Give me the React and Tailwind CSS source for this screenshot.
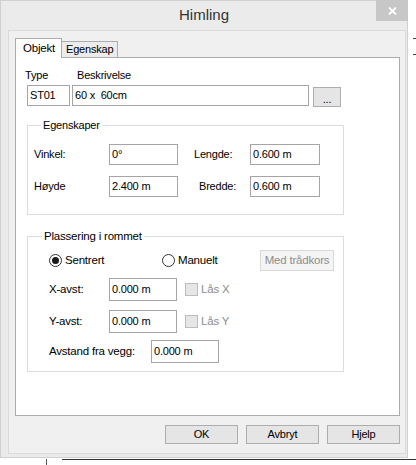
// Windows-style "Himling" dialog with tabbed properties form.
const font = { fontFamily: '"Liberation Sans", Arial, sans-serif' }

function TextBox({ value, className = '' }) {
  return (
    <div
      className={`whitespace-pre border border-[#a5a5a5] bg-white pl-[2px] pt-[3px] text-[11px] leading-[13px] text-black ${className}`}
    >
      {value}
    </div>
  )
}

function WinButton({ children, className = '' }) {
  return (
    <button
      type="button"
      className={`flex items-center justify-center border border-[#adadad] bg-[#e5e5e5] text-[11px] leading-none text-black ${className}`}
    >
      {children}
    </button>
  )
}

function Radio({ checked, label, className = '' }) {
  return (
    <label className={`flex items-center gap-[3px] ${className}`}>
      <span className="flex h-[13px] w-[13px] items-center justify-center rounded-full border border-[#333] bg-white">
        {checked && <span className="h-[7px] w-[7px] rounded-full bg-[#1a1a1a]" />}
      </span>
      <span className="text-[11.5px] text-black">{label}</span>
    </label>
  )
}

function CheckDisabled({ label }) {
  return (
    <label className="flex items-center gap-[3px]">
      <span className="h-[13px] w-[13px] border border-[#bcbcbc] bg-[#e6e6e6]" />
      <span className="text-[11.5px] text-[#8d8d8d]">{label}</span>
    </label>
  )
}

export default function App() {
  return (
    <div className="h-[465px] w-[416px] overflow-hidden bg-white tracking-[-0.2px]" style={font}>
      <div className="flex">
        {/* dialog window */}
        <div className="flex h-[458px] w-[408px] flex-col border border-[#d0d0d0] bg-[#ebebeb]">
          {/* title bar */}
          <div className="relative flex h-[29px] items-center justify-center">
            <span className="-mt-[1px] text-[15px] tracking-normal text-[#333]">Himling</span>
            <div className="absolute right-[-1px] top-[-1px] flex h-[21px] w-[32px] items-center justify-center bg-[#c7c7c7]">
              <svg width="9" height="8" viewBox="0 0 9 8">
                <path d="M1 0.5 L8 7.5 M8 0.5 L1 7.5" stroke="white" strokeWidth="1.8" />
              </svg>
            </div>
          </div>

          {/* client area */}
          <div className="ml-[7px] flex w-[398px] flex-col border border-[#dadada] bg-[#f0f0f0] pb-[9px] pl-[6px] pr-[5px] pt-[7px]">
            {/* tabs */}
            <div className="flex items-end">
              <div className="relative z-10 -mb-px flex h-[20px] w-[47px] items-start border border-b-0 border-[#acacac] bg-white pl-[7px] pt-[2px] text-[11.5px] leading-[14px] text-black">
                Objekt
              </div>
              <div className="flex h-[16px] w-[56px] items-start overflow-hidden border border-b-0 border-l-0 border-[#acacac] bg-[#ececec] pl-[4px] pt-[1px] text-[11px] leading-[13px] text-black">
                Egenskap
              </div>
            </div>

            {/* tab panel */}
            <div className="flex h-[359px] flex-col border border-[#acacac] bg-white pl-[9px]">
              <div className="mt-[11px] flex text-[11px] leading-[13px] text-black">
                <span className="w-[52px]">Type</span>
                <span>Beskrivelse</span>
              </div>
              <div className="mt-[3px] flex items-start">
                <TextBox value="ST01" className="ml-[2px] h-[21px] w-[43px]" />
                <TextBox value="60 x  60cm" className="ml-[2px] h-[21px] w-[237px]" />
                <WinButton className="ml-[4px] mt-[2px] h-[20px] w-[28px] pt-[5px]">...</WinButton>
              </div>

              {/* Egenskaper group */}
              <fieldset className="ml-[2px] mt-[12px] w-[317px] border border-[#dcdcdc] pb-[17px] pl-[6px]">
                <legend className="ml-[7px] px-[2px] text-[11px] leading-[13px] text-black">Egenskaper</legend>
                <div className="mt-[12px] flex h-[21px] items-center text-[11px] text-black">
                  <span className="w-[75px]">Vinkel:</span>
                  <TextBox value="0°" className="h-[21px] w-[69px]" />
                  <span className="ml-[16px] w-[56px]">Lengde:</span>
                  <TextBox value="0.600 m" className="h-[21px] w-[70px]" />
                </div>
                <div className="mt-[11px] flex h-[21px] items-center text-[11px] text-black">
                  <span className="w-[75px]">Høyde</span>
                  <TextBox value="2.400 m" className="h-[21px] w-[69px]" />
                  <span className="ml-[16px] w-[56px] pl-[5px]">Bredde:</span>
                  <TextBox value="0.600 m" className="h-[21px] w-[70px]" />
                </div>
              </fieldset>

              {/* Plassering group */}
              <fieldset className="ml-[2px] mt-[15px] w-[317px] border border-[#dcdcdc] pb-[8px] pl-[21px]">
                <legend className="ml-[-7px] px-[2px] text-[11.5px] leading-[13px] text-black">Plassering i rommet</legend>
                <div className="mt-[7px] flex h-[21px] items-center">
                  <Radio checked label="Sentrert" className="w-[113px]" />
                  <Radio label="Manuelt" className="w-[98px]" />
                  <button
                    type="button"
                    className="flex h-[21px] w-[74px] items-center justify-center border border-[#d9d9d9] bg-[#f4f4f4] text-[11.5px] text-[#8d8d8d]"
                  >
                    Med trådkors
                  </button>
                </div>
                <div className="mt-[7px] flex h-[23px] items-center text-[11.5px] text-black">
                  <span className="w-[60px]">X-avst:</span>
                  <TextBox value="0.000 m" className="h-[23px] w-[68px] pt-[4px] text-[11.5px]" />
                  <span className="ml-[8px]">
                    <CheckDisabled label="Lås X" />
                  </span>
                </div>
                <div className="mt-[9px] flex h-[23px] items-center text-[11.5px] text-black">
                  <span className="w-[60px]">Y-avst:</span>
                  <TextBox value="0.000 m" className="h-[23px] w-[68px] pt-[4px] text-[11.5px]" />
                  <span className="ml-[8px]">
                    <CheckDisabled label="Lås Y" />
                  </span>
                </div>
                <div className="mt-[7px] flex h-[23px] items-center text-[11.5px] text-black">
                  <span className="w-[102px]">Avstand fra vegg:</span>
                  <TextBox value="0.000 m" className="h-[23px] w-[68px] pt-[4px] text-[11.5px]" />
                </div>
              </fieldset>
            </div>

            {/* dialog buttons */}
            <div className="mt-[9px] flex justify-end gap-[8px]">
              <WinButton className="h-[19px] w-[73px]">OK</WinButton>
              <WinButton className="h-[19px] w-[73px]">Avbryt</WinButton>
              <WinButton className="h-[19px] w-[73px]">Hjelp</WinButton>
            </div>
          </div>
        </div>

        {/* desktop edge behind the dialog */}
        <div className="flex flex-1 flex-col items-end pt-[38px]">
          <span className="h-px w-[3px] bg-[#444]" />
          <span className="mt-[15px] h-px w-[3px] bg-[#444]" />
        </div>
      </div>
      <div className="flex h-[7px]">
        <span className="ml-[46px] mt-[1px] h-[6px] w-px bg-[#555]" />
        <span className="ml-[15px] mt-[1px] h-px flex-1 bg-[#333]" />
      </div>
    </div>
  )
}
